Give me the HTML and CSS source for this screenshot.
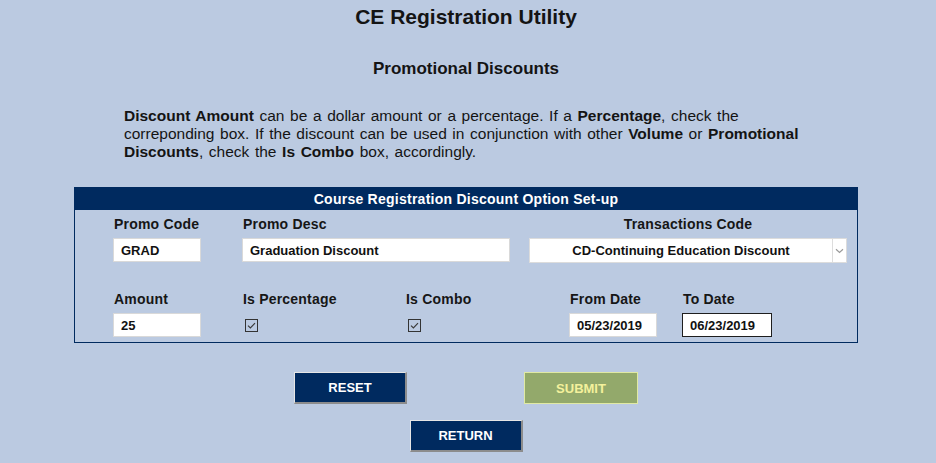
FILE: index.html
```html
<!DOCTYPE html>
<html lang="en">
<head>
<meta charset="utf-8">
<title>CE Registration Utility</title>
<link rel="stylesheet" href="styles.css">
</head>
<body>
<div class="page">
  <h1 class="title">CE Registration Utility</h1>
  <h2 class="subtitle">Promotional Discounts</h2>
  <p class="intro"><b>Discount Amount</b> can be a dollar amount or a percentage. If a <b>Percentage</b>, check the correponding box. If the discount can be used in conjunction with other <b>Volume</b> or <b>Promotional Discounts</b>, check the <b>Is Combo</b> box, accordingly.</p>

  <section class="panel">
    <div class="panel-head">Course Registration Discount Option Set-up</div>
    <div class="row row-top">
      <div class="field f-code">
        <label class="lbl">Promo Code</label>
        <input class="txt w88" type="text" value="GRAD">
      </div>
      <div class="field f-desc">
        <label class="lbl">Promo Desc</label>
        <input class="txt w268" type="text" value="Graduation Discount">
      </div>
      <div class="field f-trans">
        <label class="lbl center">Transactions Code</label>
        <div class="select">
          <select class="select-input">
            <option>CD-Continuing Education Discount</option>
          </select>
          <span class="select-arrow">
            <svg width="9" height="6" viewBox="0 0 9 6"><path d="M1 1.2 L4.5 4.5 L8 1.2" fill="none" stroke="#9a9a9a" stroke-width="1.2"/></svg>
          </span>
        </div>
      </div>
    </div>
    <div class="row row-bottom">
      <div class="field">
        <label class="lbl">Amount</label>
        <input class="txt w88" type="text" value="25">
      </div>
      <div class="field">
        <label class="lbl">Is Percentage</label>
        <span class="check-cell"><span class="check"><svg width="11" height="11" viewBox="0 0 11 11"><path d="M2 5.6 L4.4 8 L9 3.2" fill="none" stroke="#3a3a3a" stroke-width="1.2"/></svg></span></span>
      </div>
      <div class="field">
        <label class="lbl">Is Combo</label>
        <span class="check-cell"><span class="check"><svg width="11" height="11" viewBox="0 0 11 11"><path d="M2 5.6 L4.4 8 L9 3.2" fill="none" stroke="#3a3a3a" stroke-width="1.2"/></svg></span></span>
      </div>
      <div class="field">
        <label class="lbl">From Date</label>
        <input class="txt w88" type="text" value="05/23/2019">
      </div>
      <div class="field">
        <label class="lbl">To Date</label>
        <input class="txt w90 focused" type="text" value="06/23/2019">
      </div>
    </div>
  </section>

  <div class="actions">
    <div class="btn-row">
      <button class="btn" type="button">RESET</button>
      <button class="btn btn-submit" type="button">SUBMIT</button>
    </div>
    <div class="btn-row">
      <button class="btn" type="button">RETURN</button>
    </div>
  </div>
</div>
</body>
</html>
```
FILE: styles.css
```css
html, body {
  margin: 0;
  padding: 0;
  background: #bbcae1;
}
body {
  font-family: "Liberation Sans", Arial, sans-serif;
  color: #141414;
}
.page {
  margin-left: 74px;
  width: 784px;
  text-align: center;
}
.title {
  margin: 5px 0 0;
  font-size: 21px;
  line-height: 24px;
  font-weight: bold;
}
.subtitle {
  margin: 30px 0 0;
  font-size: 17px;
  line-height: 20px;
  font-weight: bold;
}
.intro {
  margin: 28px 0 0 50px;
  width: 700px;
  text-align: left;
  font-size: 15.5px;
  line-height: 18px;
  word-spacing: 1.3px;
}
.intro b {
  font-weight: bold;
}
.panel {
  margin-top: 26px;
  border: 1px solid #002a5f;
  text-align: left;
  padding-bottom: 5px;
}
.panel-head {
  background: #002a5f;
  color: #ffffff;
  height: 22px;
  line-height: 22px;
  text-align: center;
  font-size: 14px;
  font-weight: bold;
  letter-spacing: 0.25px;
}
.row {
  padding-left: 38px;
}
.row-top {
  display: flex;
  padding-top: 6px;
}
.f-code { width: 88px; margin-right: 41px; }
.f-desc { width: 268px; margin-right: 19px; }
.f-trans { width: 318px; }
.row-bottom {
  display: grid;
  grid-template-columns: 129px 163px 164px 113px 90px;
  margin-top: 28px;
}
.field {
  display: flex;
  flex-direction: column;
  align-items: flex-start;
}
.lbl {
  display: block;
  font-size: 14px;
  line-height: 16px;
  font-weight: bold;
  letter-spacing: 0.2px;
  margin: 0 0 6px 1px;
  color: #161616;
}
.lbl.center {
  align-self: stretch;
  text-align: center;
  margin-left: 0;
}
.txt {
  box-sizing: border-box;
  height: 24px;
  margin: 0;
  border: 1px solid #d9d9d9;
  background: #ffffff;
  padding: 0 0 0 7px;
  font-family: "Liberation Sans", Arial, sans-serif;
  font-size: 13px;
  font-weight: bold;
  color: #111;
  outline: none;
}
.w88 { width: 88px; }
.w90 { width: 90px; }
.w268 { width: 268px; }
.txt.focused {
  border-color: #1e1e1e;
}
.select {
  box-sizing: border-box;
  display: flex;
  width: 318px;
  height: 25px;
  border: 1px solid #dcdcdc;
  background: #ffffff;
}
.select-input {
  flex: 1;
  min-width: 0;
  -webkit-appearance: none;
  appearance: none;
  border: none;
  background: transparent;
  margin: 0;
  padding: 0;
  font-family: "Liberation Sans", Arial, sans-serif;
  font-size: 13px;
  font-weight: bold;
  color: #111;
  text-align: center;
  text-align-last: center;
  outline: none;
}
.select-arrow {
  width: 13px;
  border-left: 1px solid #dddddd;
  display: flex;
  align-items: center;
  justify-content: center;
}
.check-cell {
  height: 24px;
  display: flex;
  align-items: center;
  margin-left: 3px;
}
.check {
  box-sizing: border-box;
  width: 13px;
  height: 13px;
  border: 1px solid #333333;
  display: flex;
  align-items: center;
  justify-content: center;
}
.check svg {
  display: block;
}
.actions {
  margin-top: 29px;
  display: flex;
  flex-direction: column;
  gap: 16px;
}
.btn-row {
  display: flex;
  justify-content: center;
  gap: 117px;
}
.btn {
  box-sizing: border-box;
  width: 113px;
  height: 32px;
  margin: 0;
  padding: 0;
  background: #002a5f;
  color: #ffffff;
  font-family: "Liberation Sans", Arial, sans-serif;
  font-size: 13px;
  font-weight: bold;
  border-style: solid;
  border-width: 1px 2px 2px 1px;
  border-color: #e6e6e6 #8c8c8c #8c8c8c #e6e6e6;
}
.btn-submit {
  width: 114px;
  background: #93a96b;
  color: #f4f19c;
  border-width: 1px;
  border-color: #e0e9a3;
}
```
